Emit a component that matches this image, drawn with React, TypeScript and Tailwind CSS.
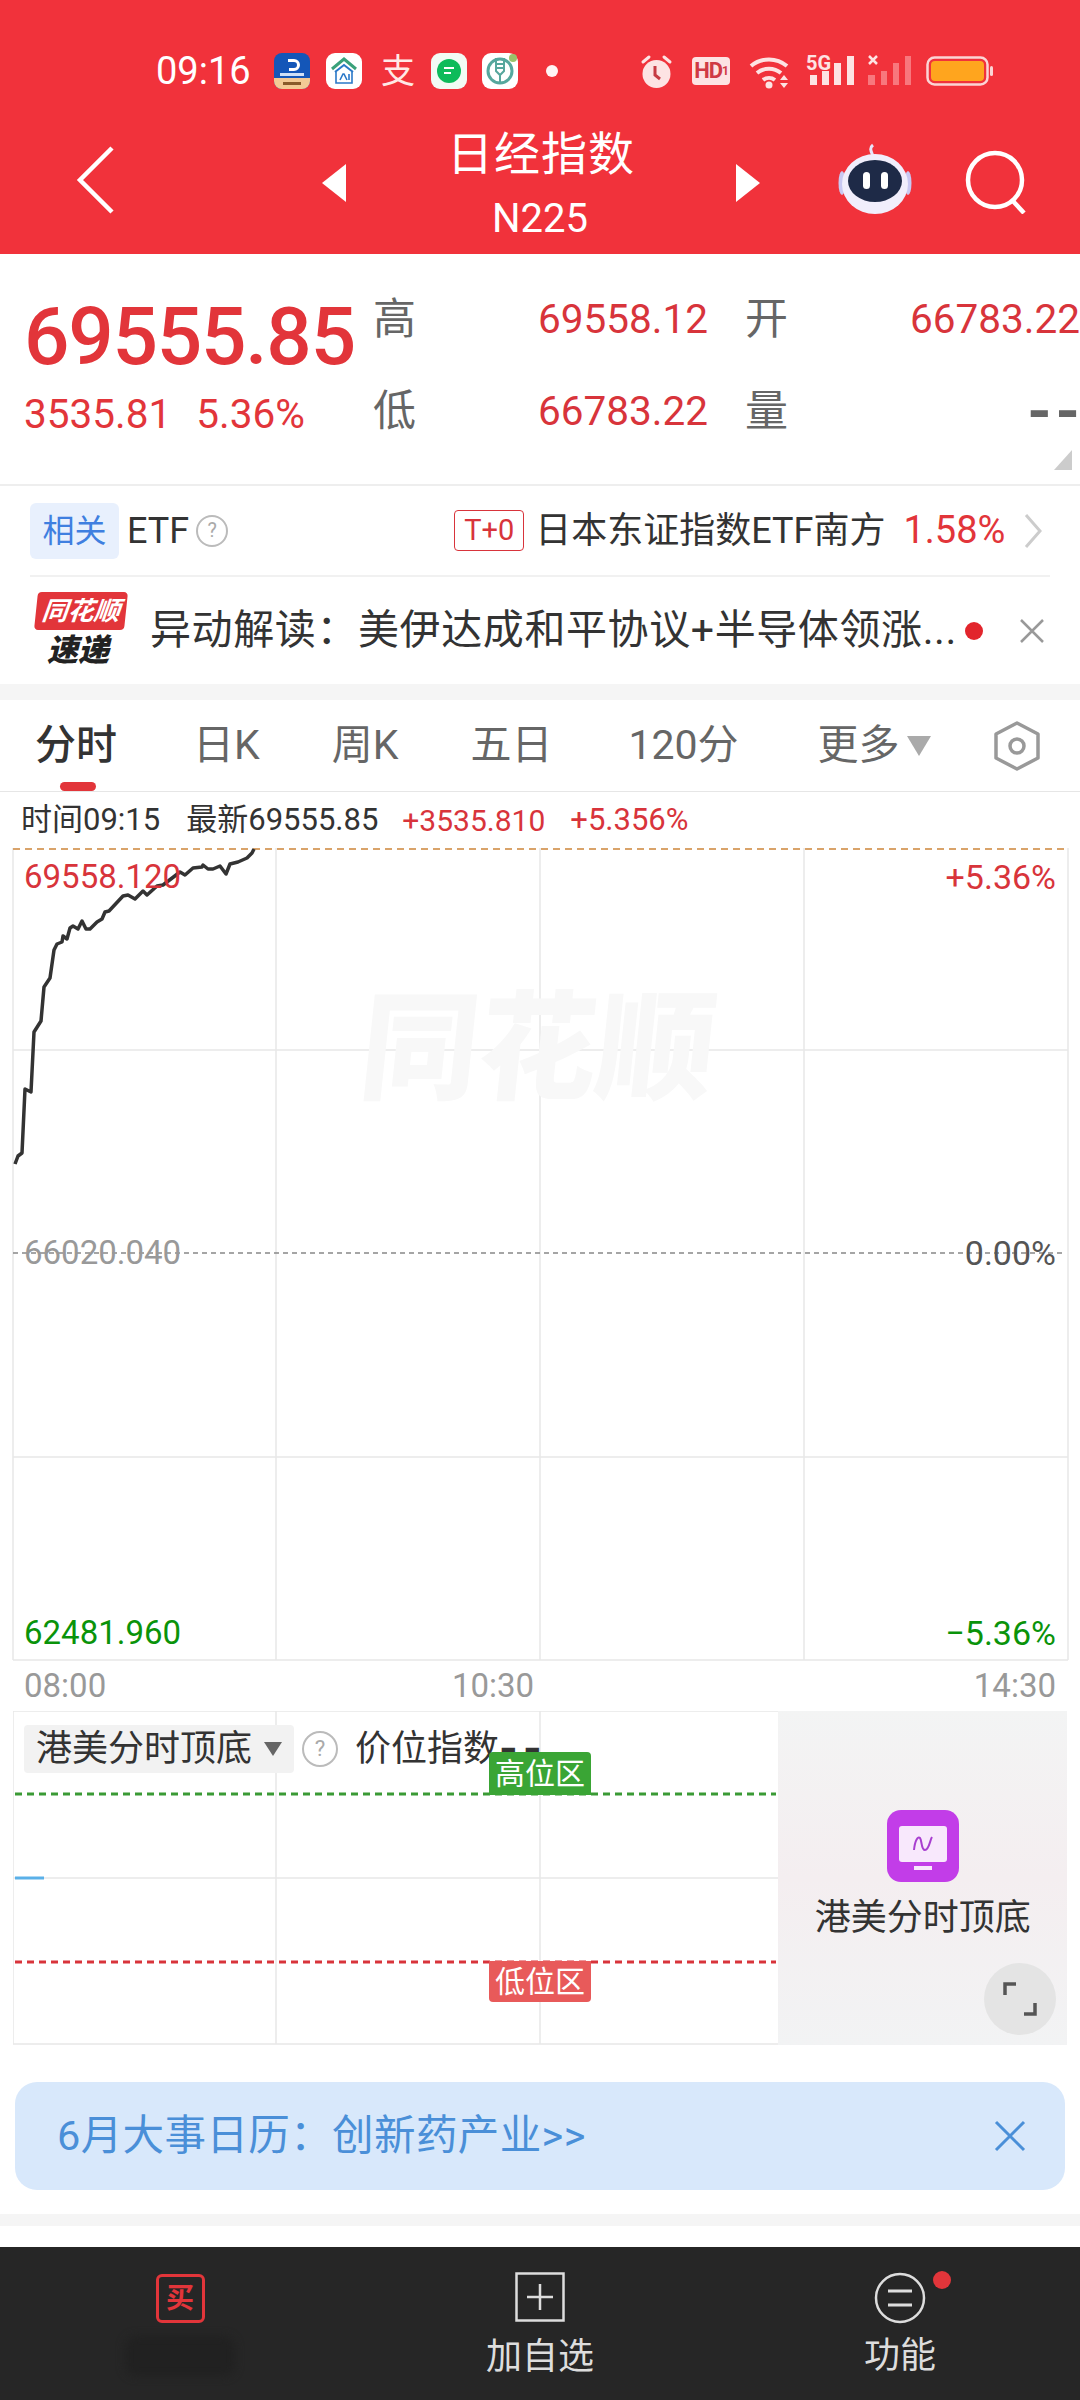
const linePoints =
  "15,1164 18,1156 22,1153 25,1089 31,1092 34,1032 41,1021 44,987 50,978 54,950 57,944 62,942 63,936 67,939 70,928 73,926 78,929 82,921 86,929 90,929 97,922 102,919 105,912 109,911 123,896 128,895 135,899 143,891 147,895 157,886 163,885 180,872 185,875 193,868 202,867 203,865 208,869 213,869 220,866 226,874 230,864 238,862 247,858 252,853 254,849";

function AppIcons() {
  return (
    <div className="flex items-center">
      <svg width="36" height="36" viewBox="0 0 36 36" className="ml-[24px]">
        <rect width="36" height="36" rx="8" fill="#1456b8" />
        <path d="M0 25h36v3a8 8 0 0 1-8 8H8a8 8 0 0 1-8-8z" fill="#f3c995" />
        <path d="M14 6h6a6 6 0 0 1 0 12h-5v-3h5a3 3 0 0 0 0-6h-6z" fill="#fff" />
        <rect x="6" y="20" width="24" height="3" fill="#cfe0f7" />
        <rect x="9" y="29" width="18" height="3" fill="#8a5a2b" />
      </svg>
      <svg width="36" height="36" viewBox="0 0 36 36" className="ml-[16px]">
        <rect width="36" height="36" rx="9" fill="#fff" />
        <path d="M6 16 18 6l12 10" fill="none" stroke="#3aa17a" strokeWidth="3" />
        <path d="M9 19 18 12l9 7" fill="none" stroke="#2a78c8" strokeWidth="2" />
        <path d="M10 19v11h16V19" fill="none" stroke="#2a78c8" strokeWidth="1.6" />
        <path d="m14 27 3-6h1l3 6M23 21v6" fill="none" stroke="#2a78c8" strokeWidth="1.6" />
      </svg>
      <span className="ml-[19px] w-[33px] text-[34px] leading-none text-[#ffe9e6]">支</span>
      <svg width="36" height="36" viewBox="0 0 36 36" className="ml-[17px]">
        <rect width="36" height="36" rx="9" fill="#f2fbf4" />
        <circle cx="18" cy="18" r="12" fill="#0dbb5a" />
        <path d="M13 15h10M13 20h7" stroke="#fff" strokeWidth="2" />
      </svg>
      <svg width="36" height="36" viewBox="0 0 36 36" className="ml-[15px]">
        <rect width="36" height="36" rx="9" fill="#fff" />
        <circle cx="18" cy="18" r="12" fill="none" stroke="#57a79d" strokeWidth="3" />
        <path d="M14 5v13l4 4 4-4V5M18 22v9M13 11h10M13 15h10" fill="none" stroke="#57a79d" strokeWidth="2" />
        <circle cx="31" cy="5" r="4" fill="#9ac26a" />
      </svg>
      <span className="ml-[28px] h-[12px] w-[12px] rounded-full bg-white/95" />
    </div>
  );
}

function SystemIcons() {
  return (
    <div className="ml-[82px] flex items-center">
      <svg width="33" height="36" viewBox="0 0 33 36">
        <circle cx="16.500" cy="21" r="14" fill="#fde3e3" />
        <path d="M3 9 9 4M30 9l-6-5" stroke="#fde3e3" strokeWidth="3" strokeLinecap="round" />
        <path d="M15 13v9l5 4" fill="none" stroke="#c63a42" strokeWidth="3" />
      </svg>
      <span className="ml-[19px] flex h-[28px] w-[38px] items-center justify-center rounded-[4px] bg-[#fde3e3] text-[22px] leading-none font-bold tracking-[-1px] text-[#d03a44]">
        HD<span className="text-[12px]">1</span>
      </span>
      <svg width="44" height="36" viewBox="0 0 44 36" className="ml-[19px]">
        <path d="M2 13a28 28 0 0 1 36 0M8 20a19 19 0 0 1 24 0M14 27a10 10 0 0 1 12 0" fill="none" stroke="#fde3e3" strokeWidth="4" />
        <circle cx="20" cy="32" r="3.500" fill="#fde3e3" />
        <path d="m35 22 4 5h-8zM35 35l4-5h-8z" fill="#fde3e3" />
      </svg>
      <svg width="48" height="36" viewBox="0 0 48 36" className="ml-[13px] overflow-visible">
        <rect x="4" y="22" width="7" height="10" fill="#fde3e3" />
        <rect x="16" y="18" width="7" height="14" fill="#fde3e3" />
        <rect x="28" y="10" width="7" height="22" fill="#fde3e3" />
        <rect x="41" y="3" width="7" height="29" fill="#fde3e3" />
        <text x="0" y="17" fontSize="20" fontWeight="700" fill="#fde3e3">5G</text>
      </svg>
      <svg width="43" height="36" viewBox="0 0 43 36" className="ml-[14px]">
        <rect x="0" y="22" width="7" height="10" fill="#f8777d" />
        <rect x="13" y="18" width="6" height="14" fill="#f8777d" />
        <rect x="25" y="10" width="6" height="22" fill="#f8777d" />
        <rect x="37" y="3" width="6" height="29" fill="#f8777d" />
        <path d="m1 3 8 8M9 3l-8 8" stroke="#fde3e3" strokeWidth="2.500" />
      </svg>
      <svg width="67" height="30" viewBox="0 0 67 30" className="ml-[15px]">
        <rect x="1.500" y="1.500" width="60" height="27" rx="7" fill="none" stroke="#fbd5d5" strokeWidth="2.500" />
        <rect x="5" y="5" width="53" height="20" rx="4" fill="#ffa51e" />
        <rect x="64" y="10" width="3" height="10" rx="1.500" fill="#fbd5d5" />
      </svg>
    </div>
  );
}

function Robot() {
  return (
    <svg width="74" height="72" viewBox="0 0 74 72">
      <path d="M35 14c-2-5-4-8 0-11" fill="none" stroke="#e8e4fa" strokeWidth="3" />
      <ellipse cx="4" cy="41" rx="3.500" ry="12" fill="#c9c8f2" />
      <ellipse cx="70" cy="41" rx="3.500" ry="12" fill="#c9c8f2" />
      <ellipse cx="37" cy="42" rx="33" ry="30" fill="#f1eefc" />
      <ellipse cx="37" cy="39" rx="27" ry="21" fill="#1e2a47" />
      <rect x="25" y="30" width="7" height="17" rx="3.500" fill="#fff" />
      <rect x="43" y="30" width="7" height="17" rx="3.500" fill="#fff" />
    </svg>
  );
}

function Header() {
  return (
    <header className="h-[254px] bg-[#f1323b] text-white">
      <div className="flex h-[142px] items-start pt-[52px] pl-[156px]">
        <div className="flex h-[38px] items-center">
          <span className="w-[94px] text-[38px] leading-none">09:16</span>
          <AppIcons />
          <SystemIcons />
        </div>
      </div>
      <div className="-mt-[16px] flex h-[112px] items-start">
        <svg width="40" height="68" viewBox="0 0 40 68" className="mt-[20px] ml-[76px]">
          <path d="M36 2 4 34l32 32" fill="none" stroke="#fff" strokeWidth="4.500" />
        </svg>
        <svg width="24" height="38" viewBox="0 0 24 38" className="mt-[38px] ml-[206px]">
          <path d="M24 0v38L0 19z" fill="#fff" />
        </svg>
        <div className="w-[390px] text-center">
          <div className="text-[46px] leading-[56px] tracking-[1px]">日经指数</div>
          <div className="mt-[17px] -ml-[2px] text-[40px] leading-[40px]">N225</div>
        </div>
        <svg width="24" height="38" viewBox="0 0 24 38" className="mt-[38px]">
          <path d="M0 0v38l24-19z" fill="#fff" />
        </svg>
        <div className="mt-[16px] ml-[78px]"><Robot /></div>
        <svg width="62" height="64" viewBox="0 0 62 64" className="mt-[24px] ml-[53px]">
          <circle cx="30" cy="30" r="27" fill="none" stroke="#fff" strokeWidth="4.500" />
          <path d="m47 50 12 13" stroke="#fff" strokeWidth="4.500" />
        </svg>
      </div>
    </header>
  );
}

function Quote() {
  return (
    <section className="relative flex h-[232px] border-b-2 border-[#eeeeee]">
      <div className="w-[373px] pl-[24px] text-[#e2353a]">
        <div className="mt-[38px] text-[80px] leading-[90px] font-medium tracking-[-1.2px] whitespace-nowrap">69555.85</div>
        <div className="mt-[7px] flex text-[40.500px] leading-[50px]">
          <span>3535.81</span>
          <span className="ml-[25px]">5.36%</span>
        </div>
      </div>
      <div className="grid h-[186px] w-[707px] grid-cols-[43px_292px_37px_43px_292px] grid-rows-[92px_92px] pt-[19px] text-[43px] text-[#666666]">
        <span className="leading-[92px]">高</span>
        <span className="text-right text-[40.500px] leading-[92px] text-[#d8343b]">69558.12</span>
        <span />
        <span className="leading-[92px]">开</span>
        <span className="text-right text-[40.500px] leading-[92px] text-[#d8343b]">66783.22</span>
        <span className="leading-[92px]">低</span>
        <span className="text-right text-[40.500px] leading-[92px] text-[#d8343b]">66783.22</span>
        <span />
        <span className="leading-[92px]">量</span>
        <span className="text-right text-[62px] leading-[92px] font-bold text-[#666666]">
          <span className="tracking-[4px]">-</span>-
        </span>
      </div>
      <svg width="18" height="20" viewBox="0 0 18 20" className="absolute right-[8px] bottom-[14px]">
        <path d="M18 0v20H0z" fill="#cccccc" />
      </svg>
    </section>
  );
}

function HelpCircle({ size = 32 }: { size?: number }) {
  return (
    <span
      className="flex shrink-0 items-center justify-center rounded-full border-2 border-[#bbbbbb] text-[#aaaaaa]"
      style={{ width: size, height: size, fontSize: size * 0.62 }}
    >
      ?
    </span>
  );
}

function EtfRow() {
  return (
    <div className="mx-[30px] flex h-[91px] items-center border-b-2 border-[#f1f1f1] text-[36px] text-[#333333]">
      <span className="flex h-[56px] w-[89px] items-center justify-center rounded-[6px] bg-[#e8f0fd] text-[32px] text-[#3f7fe0]">相关</span>
      <span className="ml-[8px]">ETF</span>
      <span className="ml-[7px]"><HelpCircle /></span>
      <span className="ml-[226px] flex h-[41px] w-[70px] items-center justify-center rounded-[4px] border border-[#d8343b] text-[29px] text-[#d8343b]">T+0</span>
      <span className="ml-[11px] whitespace-nowrap">日本东证指数ETF南方</span>
      <span className="ml-[18px] text-[38px] text-[#e2353a]">1.58%</span>
      <svg width="20" height="36" viewBox="0 0 20 36" className="ml-[18px]">
        <path d="m3 2 14 16L3 34" fill="none" stroke="#cccccc" strokeWidth="3" />
      </svg>
    </div>
  );
}

function NewsRow() {
  return (
    <div className="flex h-[107px] items-center pl-[36px]">
      <div className="flex w-[90px] flex-col items-center">
        <span className="flex h-[38px] w-[90px] -skew-x-6 items-center justify-center rounded-[4px] bg-[#e2353a] text-[26px] leading-none font-bold text-white italic">同花顺</span>
        <span className="mt-[3px] -ml-[6px] text-[31px] leading-[36px] font-black text-[#222222] italic">速递</span>
      </div>
      <span className="ml-[24px] w-[806px] whitespace-nowrap text-[41px] tracking-[0.6px] text-[#333333]">异动解读：美伊达成和平协议+半导体领涨...</span>
      <span className="ml-[9px] h-[18px] w-[18px] rounded-full bg-[#e2252c]" />
      <svg width="26" height="26" viewBox="0 0 26 26" className="ml-[36px]">
        <path d="m2 2 22 22M24 2 2 24" stroke="#999999" strokeWidth="2.500" />
      </svg>
    </div>
  );
}

function Tabs() {
  return (
    <nav className="relative flex h-[92px] items-center border-b border-[#e6e6e6] text-[41px] text-[#666666]">
      <span className="ml-[35px] font-medium text-[#333333]">分时</span>
      <span className="ml-[76px]">日K</span>
      <span className="ml-[72px]">周K</span>
      <span className="ml-[72px]">五日</span>
      <span className="ml-[76px]">120分</span>
      <span className="ml-[79px]">更多</span>
      <svg width="24" height="20" viewBox="0 0 24 20" className="ml-[7px]">
        <path d="M0 0h24L12 20z" fill="#aaaaaa" />
      </svg>
      <svg width="50" height="52" viewBox="0 0 50 52" className="ml-[61px]">
        <path d="M25 3 46 14v24L25 49 4 38V14z" fill="none" stroke="#999999" strokeWidth="3.500" strokeLinejoin="round" />
        <circle cx="25" cy="26" r="7" fill="none" stroke="#999999" strokeWidth="3.500" />
      </svg>
      <span className="absolute bottom-0 left-[60px] h-[9px] w-[36px] rounded-full bg-[#e2353a]" />
    </nav>
  );
}

function InfoLine() {
  return (
    <div className="flex h-[56px] items-center pl-[21px] text-[31px] whitespace-nowrap text-[#333333]">
      <span>时间09:15</span>
      <span className="ml-[26px]">最新69555.85</span>
      <span className="ml-[24px] text-[30px] text-[#d8343b]">+3535.810</span>
      <span className="ml-[25px] text-[#d8343b]">+5.356%</span>
    </div>
  );
}

function MainChart() {
  return (
    <div className="relative h-[813px] text-[33px] leading-[40px]">
      <svg width="1080" height="813" viewBox="0 848 1080 813" className="absolute inset-0">
        <path d="M13 848v812M276 848v812M540 848v812M804 848v812M1068 848v812M13 1050h1055M13 1457h1055M13 1660h1055" fill="none" stroke="#e8e8e8" strokeWidth="1.500" />
        <path d="M13 849h1055" stroke="#d9a36a" strokeWidth="2" strokeDasharray="7 5" />
        <path d="M13 1253h1050" stroke="#888888" strokeWidth="1.500" strokeDasharray="5 4" />
        <polyline points={linePoints} fill="none" stroke="#333333" strokeWidth="3.500" strokeLinejoin="round" />
      </svg>
      <span className="absolute top-[150px] left-[360px] w-[356px] -skew-x-6 text-center text-[118px] leading-[104px] font-black text-[#f8f8f8]">同花顺</span>
      <span className="absolute top-[9px] left-[24px] text-[#d8343b]">69558.120</span>
      <span className="absolute top-[9px] right-[24px] text-[34px] text-[#d8343b]">+5.36%</span>
      <span className="absolute top-[385px] left-[24px] text-[#999999]">66020.040</span>
      <span className="absolute top-[385px] right-[24px] text-[34px] text-[#555555]">0.00%</span>
      <span className="absolute top-[765px] left-[24px] text-[#0a930a]">62481.960</span>
      <span className="absolute top-[765px] right-[24px] text-[34px] text-[#0a930a]">−5.36%</span>
    </div>
  );
}

function TimeAxis() {
  return (
    <div className="flex h-[50px] items-center justify-between px-[24px] text-[33px] text-[#999999]">
      <span>08:00</span>
      <span className="-ml-[94px]">10:30</span>
      <span>14:30</span>
    </div>
  );
}

function SubChart() {
  return (
    <div className="relative flex h-[334px] px-[13px]">
      <div className="relative h-full w-[766px] text-[36px] text-[#333333]">
        <svg width="766" height="334" viewBox="13 1711 766 334" className="absolute inset-0">
          <path d="M13 1711v333M276 1711v333M540 1711v333M13 1711h766M13 1878h766M13 2044h766" fill="none" stroke="#e8e8e8" strokeWidth="1.500" />
          <path d="M15 1794h761" stroke="#3a9a35" strokeWidth="3" strokeDasharray="7 5" />
          <path d="M15 1962h761" stroke="#d8343b" strokeWidth="3" strokeDasharray="7 5" />
          <path d="M15 1878h29" stroke="#5ab0e8" strokeWidth="3" />
        </svg>
        <div className="relative flex items-center pt-[11px] pl-[11px]">
          <span className="flex h-[48px] w-[270px] items-center rounded-[4px] bg-[#f2f2f2] pl-[12px]">
            港美分时顶底
            <svg width="18" height="14" viewBox="0 0 18 14" className="ml-[12px]">
              <path d="M0 0h18L9 14z" fill="#666666" />
            </svg>
          </span>
          <span className="ml-[8px]"><HelpCircle size={36} /></span>
          <span className="ml-[17px] flex items-center whitespace-nowrap">
            价位指数<span className="text-[48px] leading-none font-bold tracking-[5px]">--</span>
          </span>
        </div>
        <span className="absolute top-[41px] left-[476px] flex h-[43px] w-[102px] items-center justify-center rounded-t-[4px] bg-[#3aa535] text-[30px] text-white">高位区</span>
        <span className="absolute top-[250px] left-[476px] flex h-[41px] w-[102px] items-center justify-center rounded-b-[4px] bg-[#e85a5a] text-[30px] text-white">低位区</span>
      </div>
      <div className="relative flex h-full w-[289px] flex-col items-center bg-gradient-to-b from-[#f3f4f4] via-[#f4eef0] to-[#f2f3f4] pt-[99px] text-[36px] text-[#333333]">
        <svg width="72" height="72" viewBox="0 0 72 72">
          <rect width="72" height="72" rx="14" fill="#c23de8" />
          <rect x="12" y="16" width="48" height="36" rx="3" fill="#f8e8fc" />
          <rect x="27" y="56" width="18" height="4" fill="#f8e8fc" />
          <path d="M27 40c1-10 4-14 6-12s1 12 5 12 5-10 7-13" fill="none" stroke="#a83ed0" strokeWidth="2" />
        </svg>
        <span className="mt-[12px] leading-[48px] whitespace-nowrap">港美分时顶底</span>
        <span className="absolute right-[11px] bottom-[10px] flex h-[72px] w-[72px] items-center justify-center rounded-full bg-[#e4e4e4]">
          <svg width="36" height="36" viewBox="0 0 36 36">
            <path d="M14 3H3v11M22 33h11V22" fill="none" stroke="#555555" strokeWidth="3.500" />
          </svg>
        </span>
      </div>
    </div>
  );
}

function Banner() {
  return (
    <div className="mx-[15px] mt-[37px] flex h-[108px] items-center justify-between rounded-[22px] bg-[#d8e8fb] pr-[39px] pl-[42px] text-[41.500px] tracking-[0.4px] text-[#4a8fd8]">
      <span>6月大事日历：创新药产业&gt;&gt;</span>
      <svg width="32" height="32" viewBox="0 0 32 32">
        <path d="m2 2 28 28M30 2 2 30" stroke="#4a8fd8" strokeWidth="3" />
      </svg>
    </div>
  );
}

function BottomNav() {
  return (
    <footer className="flex h-[153px] bg-[#262626] text-[36px] text-[#dddddd]">
      <div className="flex w-[360px] flex-col items-center pt-[27px]">
        <span className="flex h-[49px] w-[49px] items-center justify-center rounded-[6px] border-[3px] border-[#e2353a] text-[28px] leading-none font-bold text-[#e2353a]">买</span>
        <span className="mt-[13px] h-[40px] w-[110px] rounded-[12px] bg-[#212121] blur-[4px]" />
      </div>
      <div className="flex w-[360px] flex-col items-center pt-[25px]">
        <svg width="50" height="50" viewBox="0 0 50 50">
          <rect x="1.500" y="1.500" width="47" height="47" fill="none" stroke="#dddddd" strokeWidth="2.500" />
          <path d="M25 12v26M12 25h26" stroke="#dddddd" strokeWidth="2.500" />
        </svg>
        <span className="mt-[10px] leading-[50px]">加自选</span>
      </div>
      <div className="relative flex w-[360px] flex-col items-center pt-[25px]">
        <svg width="52" height="52" viewBox="0 0 52 52" className="-ml-[1px]">
          <circle cx="26" cy="26" r="24" fill="none" stroke="#dddddd" strokeWidth="2.500" />
          <path d="M14 19h24M14 33h24" stroke="#dddddd" strokeWidth="3" />
        </svg>
        <span className="mt-[7px] leading-[50px]">功能</span>
        <span className="absolute top-[24px] left-[213px] h-[18px] w-[18px] rounded-full bg-[#e2353a]" />
      </div>
    </footer>
  );
}

export default function App() {
  return (
    <div className="h-[2400px] w-[1080px] overflow-hidden bg-white font-[Roboto,'Noto_Sans_CJK_SC',sans-serif]">
      <Header />
      <Quote />
      <EtfRow />
      <NewsRow />
      <div className="h-[16px] bg-[#f5f5f5]" />
      <Tabs />
      <InfoLine />
      <MainChart />
      <TimeAxis />
      <SubChart />
      <Banner />
      <div className="mt-[24px] h-[12px] bg-[#f5f5f5]" />
      <div className="h-[21px]" />
      <BottomNav />
    </div>
  );
}
